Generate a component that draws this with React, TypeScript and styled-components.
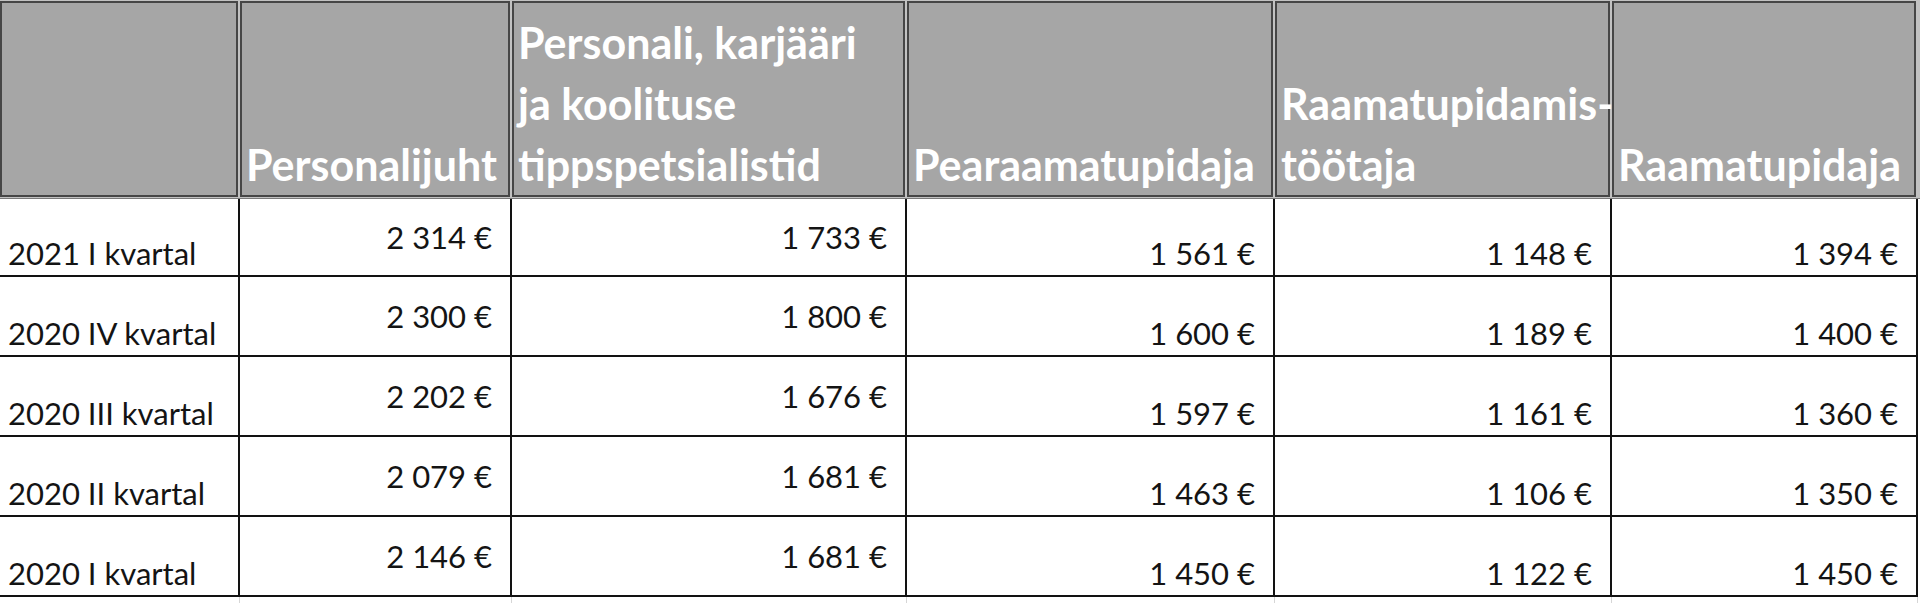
import React from 'react';
import styled, { createGlobalStyle } from 'styled-components';

const GlobalStyle = createGlobalStyle`
  html, body {
    margin: 0;
    padding: 0;
    background: #ffffff;
  }
  body {
    font-family: Lato, 'Liberation Sans', sans-serif;
  }
`;

const COLUMNS = '240px 272px 395px 368px 337px 306px';

const Sheet = styled.div`
  width: 1920px;
  height: 603px;
  overflow: hidden;
  background: #ffffff;
`;

const HeadRow = styled.div`
  display: grid;
  grid-template-columns: ${COLUMNS};
  height: 198px;
  background: #c2c2c2;
`;

const HeadCell = styled.div`
  box-sizing: border-box;
  margin: 1px 2px 1px 0;
  border: 2px solid #464646;
  background: #a6a6a6;
  color: #ffffff;
  font-family: Lato, 'Liberation Sans', sans-serif;
  font-weight: 700;
  font-size: 43px;
  line-height: 61px;
  padding: 0 0 0 4px;
  display: flex;
  flex-direction: column;
  justify-content: flex-end;
  white-space: nowrap;
  overflow: visible;
  position: relative;
  z-index: 1;
`;

const HeadLine = styled.span`
  display: block;
`;

const Body = styled.div`
  border-top: 1px solid #7a7a7a;
`;

const BodyRow = styled.div<{ $height: number }>`
  display: grid;
  grid-template-columns: ${COLUMNS};
  height: ${(p) => p.$height}px;
`;

const Cell = styled.div<{ $align: 'left' | 'right'; $valign: 'center' | 'bottom' }>`
  box-sizing: border-box;
  border-right: 2px solid #121212;
  border-bottom: 2px solid #121212;
  display: flex;
  justify-content: ${(p) => (p.$align === 'right' ? 'flex-end' : 'flex-start')};
  align-items: ${(p) => (p.$valign === 'center' ? 'center' : 'flex-end')};
  padding: ${(p) => (p.$align === 'right' ? '0 18px 1px 0' : '0 0 1px 8px')};
  color: #141414;
  font-family: Lato, 'Liberation Sans', sans-serif;
  font-size: 31px;
  line-height: 42px;
  white-space: nowrap;
`;

const TailRow = styled.div`
  display: grid;
  grid-template-columns: ${COLUMNS};
  height: 8px;
`;

const TailCell = styled.div`
  border-right: 1px solid #d6d6d6;
`;

const headers: string[][] = [
  [],
  ['Personalijuht'],
  ['Personali, karjääri', 'ja koolituse', 'tippspetsialistid'],
  ['Pearaamatupidaja'],
  ['Raamatupidamis-', 'töötaja'],
  ['Raamatupidaja'],
];

type Row = { label: string; values: string[]; height: number };

const rows: Row[] = [
  { label: '2021 I kvartal', values: ['2 314 €', '1 733 €', '1 561 €', '1 148 €', '1 394 €'], height: 78 },
  { label: '2020 IV kvartal', values: ['2 300 €', '1 800 €', '1 600 €', '1 189 €', '1 400 €'], height: 80 },
  { label: '2020 III kvartal', values: ['2 202 €', '1 676 €', '1 597 €', '1 161 €', '1 360 €'], height: 80 },
  { label: '2020 II kvartal', values: ['2 079 €', '1 681 €', '1 463 €', '1 106 €', '1 350 €'], height: 80 },
  { label: '2020 I kvartal', values: ['2 146 €', '1 681 €', '1 450 €', '1 122 €', '1 450 €'], height: 80 },
];

// the first two salary columns are centred vertically, the rest sit on the bottom
const centred = [true, true, false, false, false];

const App: React.FC = () => {
  return (
    <>
      <GlobalStyle />
      <Sheet>
        <HeadRow>
          {headers.map((lines, i) => (
            <HeadCell key={i}>
              {lines.map((line) => (
                <HeadLine key={line}>{line}</HeadLine>
              ))}
            </HeadCell>
          ))}
        </HeadRow>
        <Body>
          {rows.map((row) => (
            <BodyRow key={row.label} $height={row.height}>
              <Cell $align="left" $valign="bottom">
                {row.label}
              </Cell>
              {row.values.map((value, i) => (
                <Cell key={i} $align="right" $valign={centred[i] ? 'center' : 'bottom'}>
                  {value}
                </Cell>
              ))}
            </BodyRow>
          ))}
          <TailRow>
            {headers.map((_, i) => (
              <TailCell key={i} />
            ))}
          </TailRow>
        </Body>
      </Sheet>
    </>
  );
};

export default App;
